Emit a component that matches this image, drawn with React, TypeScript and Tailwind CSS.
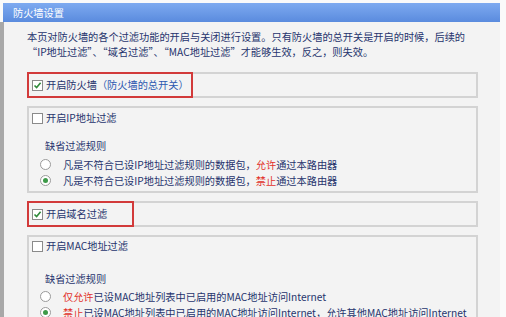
import type { ReactNode } from 'react';

const font = { fontFamily: '"Noto Sans CJK SC", "Noto Sans", sans-serif' };

function Check({ checked }: { checked?: boolean }) {
  return (
    <span className="flex h-[11px] w-[11px] shrink-0 items-center justify-center border border-[#8a8a8a] bg-white">
      {checked && (
        <svg width="9" height="9" viewBox="0 0 9 9">
          <path d="M1.5 4.5 L3.6 6.6 L7.6 1.8" fill="none" stroke="#2f8a3a" strokeWidth="1.6" />
        </svg>
      )}
    </span>
  );
}

function Radio({ checked }: { checked?: boolean }) {
  return (
    <span className="flex h-[11px] w-[11px] shrink-0 items-center justify-center rounded-full border border-[#9a9a9a] bg-white">
      {checked && <span className="h-[5px] w-[5px] rounded-full bg-[#3d9a48]" />}
    </span>
  );
}

function Box({ children, red, className = '' }: { children: ReactNode; red?: number; className?: string }) {
  return (
    <div className={`relative border-2 border-[#d3d3d3] ${className}`}>
      {children}
      {red && (
        <div className="absolute -left-[2px] -top-[2px] h-[calc(100%+4px)] border-2 border-[#d23a3a]" style={{ width: red }} />
      )}
    </div>
  );
}

function Red({ children }: { children: ReactNode }) {
  return <span className="text-[#e2322b]">{children}</span>;
}

export default function App() {
  return (
    <div className="flex h-[317px] w-[506px] overflow-hidden bg-[#fafafa] text-[10.2px] text-[#26336d]" style={font}>
      <div className="flex w-[500px] flex-col pt-[3px]">
        <div className="ml-[3px] flex h-[19px] shrink-0 items-center bg-gradient-to-b from-[#7eaaf0] to-[#5a8bde] pl-[10px] pt-[1px] text-[10.2px] text-white">
          防火墙设置
        </div>
        <div className="flex flex-1 flex-col border-l-[4px] border-[#a8a8a8] bg-[#f3f3f3] pl-[23px] pr-[22px] pt-[7px]">
          <p className="leading-[15px]">
            本页对防火墙的各个过滤功能的开启与关闭进行设置。只有防火墙的总开关是开启的时候，后续的
            <br />
            “IP地址过滤”、“域名过滤”、“MAC地址过滤”才能够生效，反之，则失效。
          </p>

          <div className="mt-[13px] flex flex-col gap-[8px]">
            <Box red={166} className="h-[26px]">
              <div className="flex h-full items-center gap-[3px] pl-[3px]">
                <Check checked />
                <span>
                  开启防火墙<span className="text-[#2c58b0]">（防火墙的总开关）</span>
                </span>
              </div>
            </Box>

            <Box className="h-[87px]">
              <div className="flex h-[20px] items-center gap-[3px] pl-[3px]">
                <Check />
                <span>开启IP地址过滤</span>
              </div>
              <div className="mt-[10px] pl-[16px] leading-[16px]">缺省过滤规则</div>
              <div className="mt-[3px] flex flex-col gap-[1px] pl-[11px] leading-[15px]">
                <div className="flex items-center gap-[12px]">
                  <Radio />
                  <span>
                    凡是不符合已设IP地址过滤规则的数据包，<Red>允许</Red>通过本路由器
                  </span>
                </div>
                <div className="flex items-center gap-[12px]">
                  <Radio checked />
                  <span>
                    凡是不符合已设IP地址过滤规则的数据包，<Red>禁止</Red>通过本路由器
                  </span>
                </div>
              </div>
            </Box>

            <Box red={107} className="h-[26px]">
              <div className="flex h-full items-center gap-[3px] pl-[3px]">
                <Check checked />
                <span>开启域名过滤</span>
              </div>
            </Box>

            <Box className="h-[100px]">
              <div className="flex h-[18px] items-center gap-[3px] pl-[3px]">
                <Check />
                <span>开启MAC地址过滤</span>
              </div>
              <div className="mt-[16px] pl-[16px] leading-[16px]">缺省过滤规则</div>
              <div className="mt-[2px] flex flex-col gap-[1px] pl-[11px] leading-[15px]">
                <div className="flex items-center gap-[12px]">
                  <Radio />
                  <span>
                    <Red>仅允许</Red>已设MAC地址列表中已启用的MAC地址访问Internet
                  </span>
                </div>
                <div className="flex items-center gap-[12px]">
                  <Radio checked />
                  <span>
                    <Red>禁止</Red>已设MAC地址列表中已启用的MAC地址访问Internet，允许其他MAC地址访问Internet
                  </span>
                </div>
              </div>
            </Box>
          </div>
        </div>
      </div>
    </div>
  );
}
